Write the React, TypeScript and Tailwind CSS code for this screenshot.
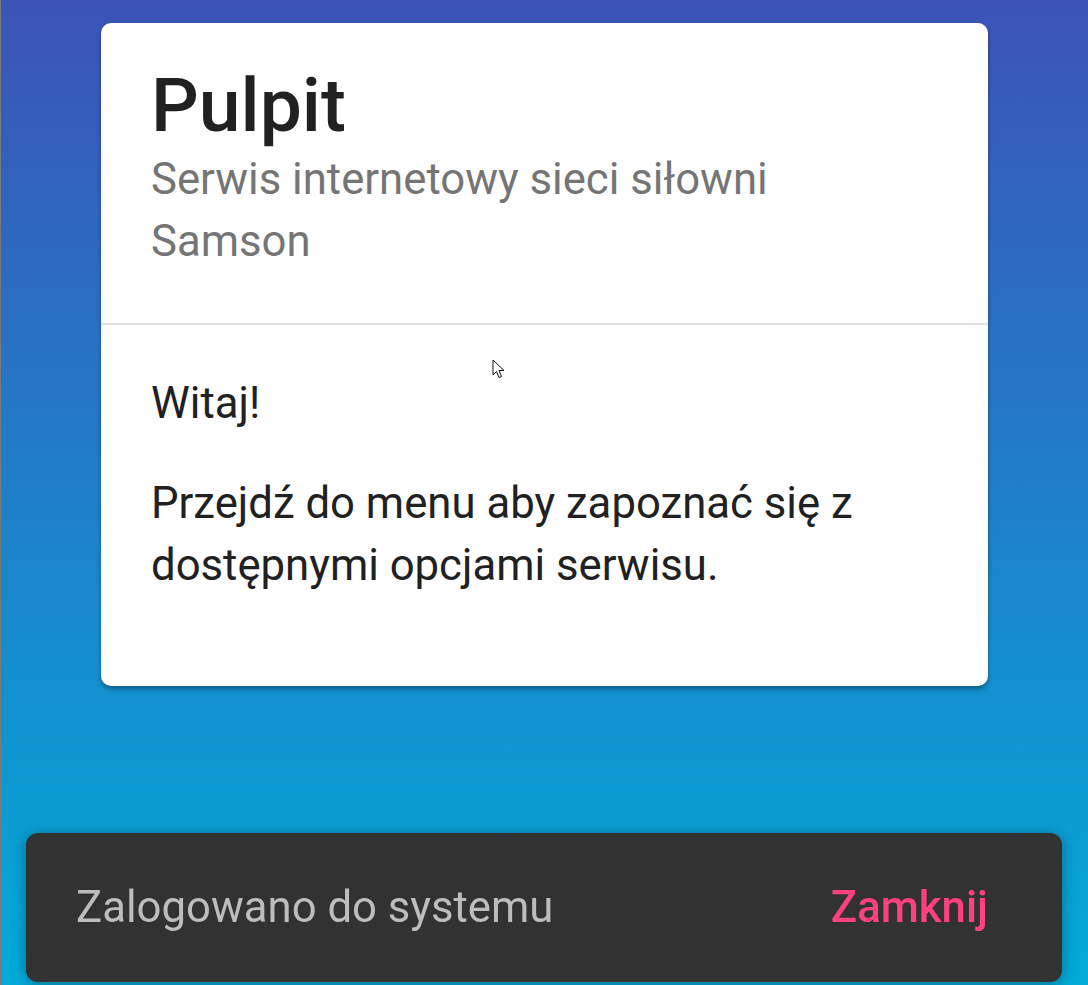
export default function App() {
  return (
    <div
      className="relative flex h-[985px] w-full flex-col border-l border-[#7a7a7a] bg-linear-to-b/srgb from-[#3c53b7] to-[#02abd8]"
      style={{ fontFamily: "Roboto, 'Liberation Sans', sans-serif" }}
    >
      <div className="mx-auto mt-[23px] w-[887px] overflow-hidden rounded-[10px] bg-white shadow-[0_3px_4px_rgba(0,0,0,0.35)]">
        <div className="pb-[51px] pl-[50px] pr-[48px] pt-[45px]">
          <h1 className="text-[75px] font-medium leading-[75px] text-[#212121]">Pulpit</h1>
          <p className="mt-[5px] w-[640px] text-[43.7px] leading-[62px] text-[#757575]">
            Serwis internetowy sieci siłowni Samson
          </p>
        </div>
        <div className="h-[2px] bg-[#e0e0e0]" />
        <div className="pb-[90px] pl-[50px] pr-[48px] pt-[47px] text-[43.7px] leading-[62px] text-[#212121]">
          <p>Witaj!</p>
          <p className="mt-[38px] w-[740px]">
            Przejdź do menu aby zapoznać się z dostępnymi opcjami serwisu.
          </p>
        </div>
      </div>

      {/* mouse pointer */}
      <svg
        className="absolute left-[491px] top-[359px]"
        width="14"
        height="20"
        viewBox="0 0 14 20"
      >
        <path
          d="M1 1 L1 16 L4.5 12.5 L7 18.5 L9.5 17.5 L7 11.5 L12 11.5 Z"
          fill="white"
          stroke="#111"
          strokeWidth="1"
          strokeLinejoin="round"
        />
      </svg>

      <div className="fixed bottom-[3px] left-[26px] right-[26px] flex h-[149px] items-center justify-between rounded-[12px] bg-[#323232] pl-[50px] pr-[74px] shadow-[0_2px_14px_rgba(0,0,0,0.35)]">
        <span className="text-[43.7px] text-[#bdbdbd]">Zalogowano do systemu</span>
        <span className="text-[43.7px] font-medium text-[#ff4081]">Zamknij</span>
      </div>
    </div>
  );
}
